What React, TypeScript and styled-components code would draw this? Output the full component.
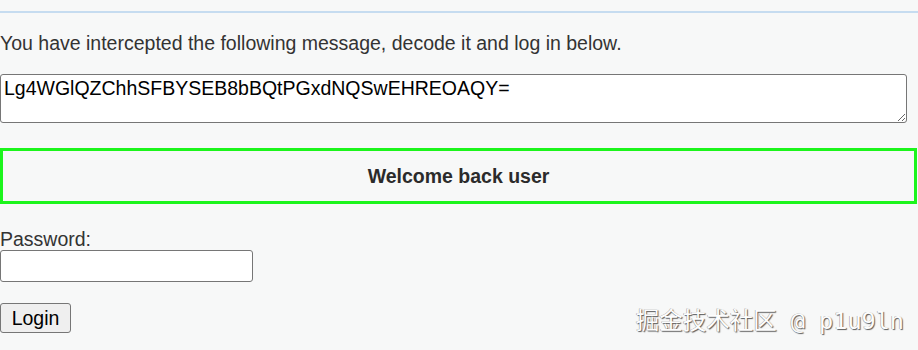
import React from "react";
import styled, { createGlobalStyle } from "styled-components";

const Global = createGlobalStyle`
  html, body { margin: 0; padding: 0; background: #f7f8f8; }
  body { font-family: "Liberation Sans", Arial, sans-serif; color: #333; }
`;

const Page = styled.div`
  width: 918px;
  height: 350px;
  position: relative;
  overflow: hidden;
  padding-top: 11px;
  box-sizing: border-box;
`;

const Rule = styled.div`
  height: 2px;
  background: #c6dcf0;
`;

const Intro = styled.p`
  margin: 19px 0 0;
  font-size: 19.5px;
  line-height: 22px;
  color: #333;
`;

const Message = styled.textarea`
  display: block;
  box-sizing: border-box;
  margin: 20px 0 0;
  width: 907px;
  height: 49px;
  border: 1px solid #767676;
  border-radius: 3px;
  background: #fff;
  padding: 2px 3px;
  font-family: "Liberation Sans", Arial, sans-serif;
  font-size: 19.5px;
  line-height: 22px;
  color: #000;
  resize: vertical;
  outline: none;
`;

const Banner = styled.div`
  box-sizing: border-box;
  margin-top: 25px;
  width: 917px;
  height: 56px;
  border: 3px solid #1cf51c;
  display: flex;
  align-items: center;
  justify-content: center;
  font-weight: bold;
  font-size: 19.5px;
  color: #2b2b2b;
`;

const Form = styled.form`
  display: flex;
  flex-direction: column;
  align-items: flex-start;
  margin-top: 25px;
`;

const Label = styled.label`
  font-size: 19.5px;
  line-height: 21px;
  color: #333;
`;

const PasswordInput = styled.input`
  box-sizing: border-box;
  width: 253px;
  height: 32px;
  margin: 0;
  border: 1px solid #767676;
  border-radius: 3px;
  background: #fff;
  font-size: 18px;
  outline: none;
`;

const LoginButton = styled.button`
  box-sizing: border-box;
  margin-top: 21px;
  width: 71px;
  height: 30px;
  border: 1px solid #767676;
  border-radius: 3px;
  background: #efefef;
  font-family: "Liberation Sans", Arial, sans-serif;
  font-size: 19.5px;
  color: #000;
  padding: 0;
`;

const Watermark = styled.div`
  position: absolute;
  right: 14px;
  bottom: 16px;
  font-family: "DejaVu Sans Mono", "Noto Sans CJK SC", monospace;
  font-size: 23.5px;
  line-height: 26px;
  color: #fdfdfd;
  text-shadow: 1px 1px 1px #5a5a5a, -0.5px -0.5px 0 #9a9a9a;
  white-space: nowrap;
`;

const Cjk = styled.span`
  font-family: "Noto Sans CJK SC", sans-serif;
`;

export default function App() {
  return (
    <Page>
      <Global />
      <Rule />
      <Intro>You have intercepted the following message, decode it and log in below.</Intro>
      <Message defaultValue="Lg4WGlQZChhSFBYSEB8bBQtPGxdNQSwEHREOAQY=" />
      <Banner>Welcome back user</Banner>
      <Form onSubmit={(e) => e.preventDefault()}>
        <Label htmlFor="pw">Password:</Label>
        <PasswordInput id="pw" type="password" />
        <LoginButton type="submit">Login</LoginButton>
      </Form>
      <Watermark>
        <Cjk>掘金技术社区</Cjk> @ p1u9ln
      </Watermark>
    </Page>
  );
}
